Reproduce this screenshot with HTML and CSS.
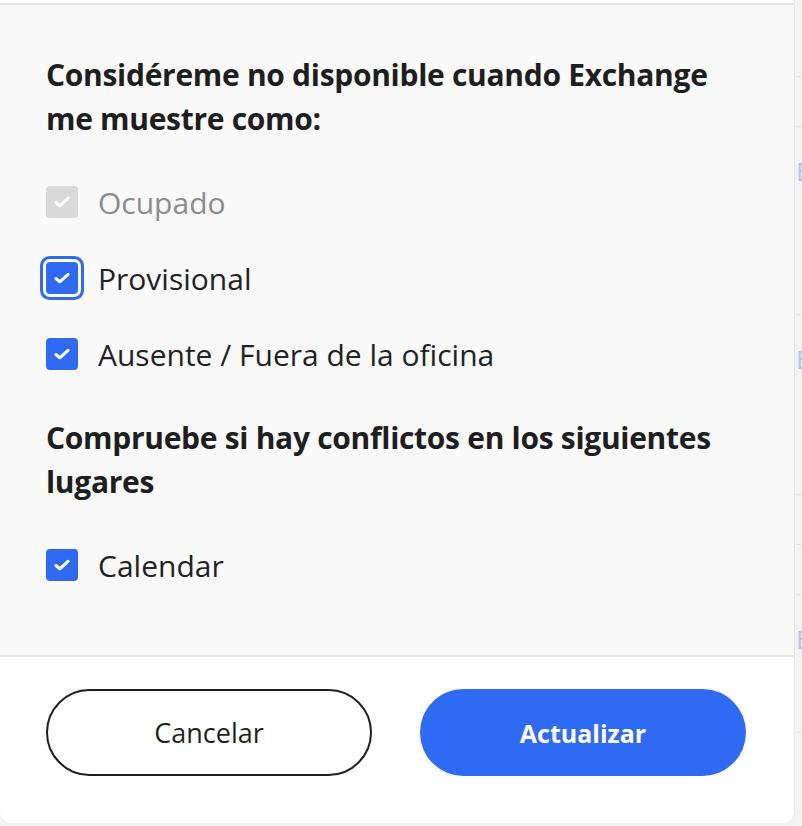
FILE: index.html
```html
<!DOCTYPE html>
<html lang="es">
<head>
    <meta charset="UTF-8">
    <meta name="viewport" content="width=device-width, initial-scale=1.0">
    <title>Disponibilidad</title>
    <link rel="stylesheet" href="styles.css">
</head>
<body>
    <div class="page">
        <div class="dialog">
            <div class="dialog-top"></div>

            <div class="dialog-body">
                <h2 class="section-title">Considéreme no disponible cuando Exchange me muestre como:</h2>

                <div class="options">
                    <label class="option disabled">
                        <span class="box">
                            <svg viewBox="0 0 16 12" width="16" height="12"><path d="M2 6.5l3.8 3.3L14 2.3" /></svg>
                        </span>
                        Ocupado
                    </label>
                    <label class="option focused">
                        <span class="box">
                            <svg viewBox="0 0 16 12" width="16" height="12"><path d="M2 6.5l3.8 3.3L14 2.3" /></svg>
                        </span>
                        Provisional
                    </label>
                    <label class="option">
                        <span class="box">
                            <svg viewBox="0 0 16 12" width="16" height="12"><path d="M2 6.5l3.8 3.3L14 2.3" /></svg>
                        </span>
                        Ausente / Fuera de la oficina
                    </label>
                </div>

                <h2 class="section-title">Compruebe si hay conflictos en los siguientes lugares</h2>

                <div class="options">
                    <label class="option">
                        <span class="box">
                            <svg viewBox="0 0 16 12" width="16" height="12"><path d="M2 6.5l3.8 3.3L14 2.3" /></svg>
                        </span>
                        Calendar
                    </label>
                </div>
            </div>

            <div class="dialog-footer">
                <button class="btn btn-outline">Cancelar</button>
                <button class="btn btn-primary">Actualizar</button>
            </div>
        </div>

        <div class="backdrop">
            <div class="strip" style="height: 77px"></div>
            <div class="strip" style="height: 50px"></div>
            <div class="strip strip-e" style="height: 188px"><span>E</span></div>
            <div class="strip strip-e" style="height: 180px"><span>E</span></div>
            <div class="strip" style="height: 50px"></div>
            <div class="strip" style="height: 50px"></div>
            <div class="strip strip-e" style="height: 138px"><span>E</span></div>
        </div>
    </div>
</body>
</html>
```

FILE: styles.css
```css
body {
    margin: 0;
    font-family: "Open Sans", Lato, sans-serif;
    background-color: #f2f2f2;
    color: #1e1e1e;
}

.page {
    display: flex;
    height: 826px;
    overflow: hidden;
}

.dialog {
    width: 794px;
    height: 823px;
    flex-shrink: 0;
    display: flex;
    flex-direction: column;
    background-color: white;
    border-right: 1px solid #e8e8e8;
    border-radius: 0 0 12px 12px;
    overflow: hidden;
}

.dialog-top {
    height: 3px;
    background-color: white;
    border-bottom: 2px solid #e4e4e4;
}

.dialog-body {
    flex: 1;
    background-color: #f9f9f9;
    padding: 48px 46px 0;
    border-bottom: 2px solid #e4e4e4;
}

.section-title {
    margin: 0;
    font-size: 30px;
    font-weight: 700;
    line-height: 44px;
    letter-spacing: -0.3px;
    color: #1e1e1e;
    max-width: 700px;
}

.options {
    display: flex;
    flex-direction: column;
    gap: 44px;
    padding: 45px 0 46px;
}

.option {
    display: flex;
    align-items: center;
    gap: 20px;
    height: 32px;
    font-size: 30px;
    color: #222;
}

.box {
    flex-shrink: 0;
    width: 32px;
    height: 32px;
    border-radius: 4px;
    background-color: #2f6af4;
    display: flex;
    align-items: center;
    justify-content: center;
}

.box svg {
    fill: none;
    stroke: white;
    stroke-width: 3;
    stroke-linecap: round;
    stroke-linejoin: round;
}

.option.disabled {
    color: #8c8c8c;
}

.option.disabled .box {
    background-color: #d9d9d9;
}

.option.focused .box {
    box-shadow: 0 0 0 3px white, 0 0 0 6px #2f6af4;
}

.dialog-footer {
    height: 166px;
    display: flex;
    align-items: flex-start;
    gap: 48px;
    padding: 32px 46px 0;
    box-sizing: border-box;
}

.btn {
    width: 326px;
    height: 87px;
    border-radius: 44px;
    font-family: "Open Sans", Lato, sans-serif;
    cursor: pointer;
}

.btn-outline {
    background-color: white;
    border: 2px solid #1e1e1e;
    color: #1e1e1e;
    font-size: 27px;
}

.btn-primary {
    background-color: #2f6af4;
    border: none;
    color: white;
    font-size: 25px;
    font-weight: 700;
}

.backdrop {
    flex: 1;
    display: flex;
    flex-direction: column;
    background-color: #f3f3f3;
}

.strip {
    border-bottom: 1px solid #e6e6e6;
    box-sizing: border-box;
    flex-shrink: 0;
}

.strip-e span {
    display: block;
    padding: 31px 0 0 1px;
    font-size: 26px;
    line-height: 26px;
    color: #b3c3f3;
}
```
